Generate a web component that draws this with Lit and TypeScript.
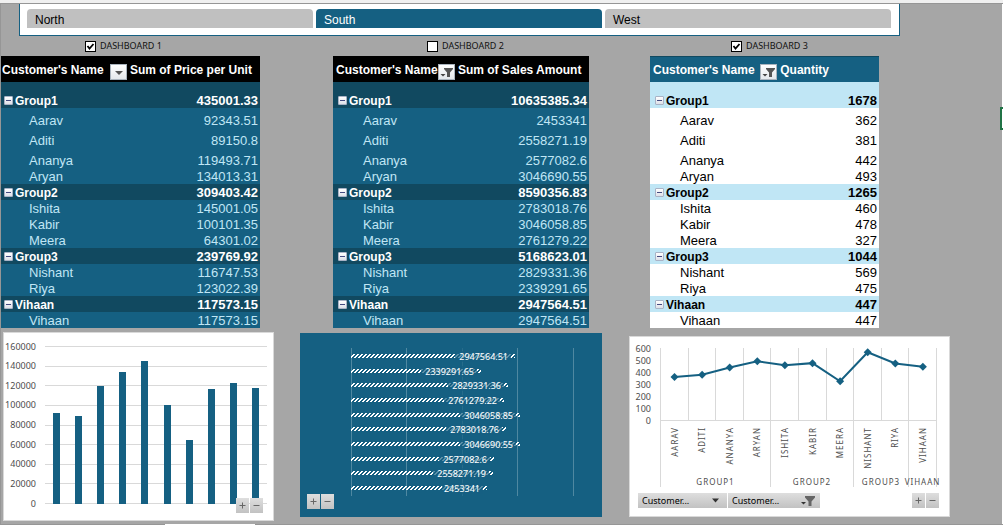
import { LitElement, html, svg, css, nothing } from "lit";
import { customElement, property, state } from "lit/decorators.js";
import { classMap } from "lit/directives/class-map.js";

interface Member { name: string; price: number; sales: number; qty: number; }
interface Group { name: string; price: number; sales: number; qty: number; members: Member[]; }
type Measure = "price" | "sales" | "qty";

const GROUPS: Group[] = [
  { name: "Group1", price: 435001.33, sales: 10635385.34, qty: 1678, members: [
    { name: "Aarav", price: 92343.51, sales: 2453341, qty: 362 },
    { name: "Aditi", price: 89150.8, sales: 2558271.19, qty: 381 },
    { name: "Ananya", price: 119493.71, sales: 2577082.6, qty: 442 },
    { name: "Aryan", price: 134013.31, sales: 3046690.55, qty: 493 } ] },
  { name: "Group2", price: 309403.42, sales: 8590356.83, qty: 1265, members: [
    { name: "Ishita", price: 145001.05, sales: 2783018.76, qty: 460 },
    { name: "Kabir", price: 100101.35, sales: 3046058.85, qty: 478 },
    { name: "Meera", price: 64301.02, sales: 2761279.22, qty: 327 } ] },
  { name: "Group3", price: 239769.92, sales: 5168623.01, qty: 1044, members: [
    { name: "Nishant", price: 116747.53, sales: 2829331.36, qty: 569 },
    { name: "Riya", price: 123022.39, sales: 2339291.65, qty: 475 } ] },
  { name: "Vihaan", price: 117573.15, sales: 2947564.51, qty: 447, members: [
    { name: "Vihaan", price: 117573.15, sales: 2947564.51, qty: 447 } ] },
];
const MEMBERS = GROUPS.flatMap((g) => g.members);

const arrowIcon = html`<svg class="glyph" viewBox="0 0 17 16" aria-hidden="true">
  <path d="M5 7h8L9 11z" fill="#555"/></svg>`;
const funnelIcon = html`<svg class="glyph" viewBox="0 0 17 16" aria-hidden="true">
  <path d="M2.500 10h5L5 12.500z" fill="#444"/>
  <path d="M6 4h9v1l-3 3.500V13H9V8.500L6 5z" fill="#555"/></svg>`;

@customElement("pivot-table")
class PivotTable extends LitElement {
  @property() heading = "";
  @property() measure: Measure = "price";
  @property() tone: "black" | "light" = "black";
  @property({ type: Boolean }) filtered = false;
  @property({ type: Boolean }) inset = false;
  @state() private closed = new Set<string>();

  static styles = css`
    :host { display: block; }
    table {
      width: 100%; border-collapse: collapse; table-layout: fixed;
      font: 13px/14px "Liberation Sans", Arial, sans-serif;
      background: #156082; color: #c0e6f5;
    }
    .c1 { width: 49%; }
    .inset .c1 { width: 48%; }
    .light .c1 { width: 56%; }
    th, td { padding: 2px 2px 0; vertical-align: bottom; white-space: nowrap; text-align: left; }
    td { text-align: right; }
    thead th { font-size: 12px; padding: 0 2px; vertical-align: middle; background: #000; color: #fff; }
    thead th:first-child { padding: 0 1px; }
    .inset thead th:first-child { padding-left: 3px; }
    .label { display: flex; align-items: center; justify-content: space-between; box-sizing: border-box; height: 26px; padding-top: 2px; }
    .label button { align-self: end; margin-bottom: 2px; flex: none; }
    button { padding: 0; font: inherit; }
    .filter { width: 17px; height: 16px; border: 1px solid #aab4be; background: linear-gradient(#fff, #e4e8ec); }
    .glyph { display: block; width: 17px; height: 16px; margin: -1px; }
    .group th { font-size: 12px; padding-left: 3px; }
    .inset .group th { padding-left: 5px; }
    .group { background: #114960; color: #fff; font-weight: 700; }
    .group th span { padding-left: 2px; }
    .toggle {
      width: 9px; height: 9px; border: 1px solid #a9b3c6; border-radius: 1px; vertical-align: 1px;
      background: linear-gradient(#444a80, #444a80) center / 5px 1px no-repeat, linear-gradient(#fff, #dde0e8);
    }
    .member th { font-weight: 400; padding-left: 28px; }
    .inset .member th { padding-left: 30px; }
    .tall > * { height: 18px; }
    .first > * { height: 24px; }
    .light table { background: #fff; color: #000; }
    .light thead th { background: linear-gradient(#114960, #114960) top / 100% 1px no-repeat #156082; color: #fff; }
    .light .group { background: #c0e6f5; color: #000; }
  `;

  private flip(name: string) {
    const next = new Set(this.closed);
    next.has(name) ? next.delete(name) : next.add(name);
    this.closed = next;
  }

  render() {
    return html`<div class=${classMap({ light: this.tone === "light", inset: this.inset })}>
      <table>
        <colgroup><col class="c1"><col></colgroup>
        <thead><tr>
          <th scope="col"><div class="label">Customer's Name
            <button class="filter" aria-label="Filter customers">${this.filtered ? funnelIcon : arrowIcon}</button></div></th>
          <th scope="col"><div class="label">${this.heading}</div></th>
        </tr></thead>
        <tbody>${GROUPS.map((g, gi) => html`
          <tr class=${classMap({ group: true, first: gi === 0 })}>
            <th scope="row"><button class="toggle" aria-label="Toggle ${g.name}" @click=${() => this.flip(g.name)}></button><span>${g.name}</span></th>
            <td>${g[this.measure]}</td>
          </tr>
          ${this.closed.has(g.name) ? nothing : g.members.map((m, i) => html`
            <tr class=${classMap({ member: true, tall: gi === 0 && i < 3 })}>
              <th scope="row">${m.name}</th><td>${m[this.measure]}</td></tr>`)}`)}
        </tbody>
      </table></div>`;
  }
}

@customElement("zoom-buttons")
class ZoomButtons extends LitElement {
  static styles = css`
    :host { display: flex; gap: 1px; }
    button { width: 13px; height: 15px; padding: 0; border: 0; background: linear-gradient(#dedede, #c2c2c2); }
    svg { display: block; width: 13px; height: 15px; }
  `;
  render() {
    return html`
      <button aria-label="Expand field"><svg viewBox="0 0 13 15"><path d="M3.500 7.500h6M6.500 4.500v6" stroke="#666"/></svg></button>
      <button aria-label="Collapse field"><svg viewBox="0 0 13 15"><path d="M3.500 7.500h6" stroke="#666"/></svg></button>`;
  }
}

const chartStyles = css`
  :host { display: block; position: relative; }
  .plot { display: block; width: 100%; height: auto; font: 9px "Noto Sans", sans-serif; fill: #4d4d4d; }
  .frame { border: 1px solid #d9d9d9; background: #fff; }
  .end { text-anchor: end; }
  .mid { text-anchor: middle; }
`;

@customElement("price-chart")
class PriceChart extends LitElement {
  static styles = [chartStyles, css`zoom-buttons { position: absolute; right: 11px; bottom: 8px; }`];
  render() {
    const y = (v: number) => 170.5 - (v / 160000) * 157;
    const ticks = Array.from({ length: 9 }, (_, i) => i * 20000);
    return html`<div class="frame">
      <svg class="plot" viewBox="0 0 269 187" role="img" aria-label="Sum of Price per Unit">
        ${ticks.map((t) => svg`
          <path d="M41 ${Math.floor(y(t)) + 0.5}H263" stroke="#d9d9d9"/>
          <text class="end" x="32" y=${Math.round(y(t)) + 3}>${t}</text>`)}
        ${MEMBERS.map((m, i) => svg`
          <rect x=${Math.round(49 + i * 22.1)} y=${Math.round(y(m.price))} width="7" height=${171 - Math.round(y(m.price))} fill="#156082"/>`)}
      </svg></div><zoom-buttons></zoom-buttons>`;
  }
}

@customElement("sales-chart")
class SalesChart extends LitElement {
  static styles = [chartStyles, css`
    .panel { background: #156082; }
    .value { fill: #fff; }
    zoom-buttons { position: absolute; left: 7px; bottom: 8px; }
  `];
  render() {
    const rows = [...MEMBERS].reverse();
    return html`<div class="panel">
      <svg class="plot" viewBox="0 0 302 184" role="img" aria-label="Sum of Sales Amount">
        <defs><pattern id="hatch" width="4" height="4" patternUnits="userSpaceOnUse">
          <path d="M2 0h2v1h-2zM1 1h2v1h-2zM0 2h2v1h-2zM0 3h1v1h-1zM3 3h1v1h-1z" fill="#fff" shape-rendering="crispEdges"/>
        </pattern></defs>
        ${[51.5, 106.5, 162.5, 217.5, 273.5].map((x, i) => svg`
          <path d="M${x} 15V163" stroke="#fff" stroke-opacity=${i === 2 ? 0.08 : 0.25}/>`)}
        ${rows.map((m, i) => {
          const top = Math.round(21 + i * 14.67);
          const w = Math.round(m.sales / 18000);
          const label = String(m.sales);
          const lw = Math.round(label.length * 5 + 6);
          return svg`
            <g transform="translate(51 ${top})">
              <rect width=${w} height="4" fill="url(#hatch)"/>
              <rect x=${w - lw - 4} y="-3" width=${lw} height="11" fill="#156082" fill-opacity="0.7"/>
              <text class="value end" x=${w - 7} y="6">${label}</text>
            </g>`;
        })}
      </svg></div><zoom-buttons></zoom-buttons>`;
  }
}

@customElement("quantity-chart")
class QuantityChart extends LitElement {
  static styles = [chartStyles, css`
    .names { font-size: 8px; letter-spacing: 1px; }
    .controls { display: flex; gap: 1px; padding: 5px 10px 8px 8px; }
    .field { position: relative; width: 89px; }
    .field.wide { width: 92px; }
    select {
      display: block; appearance: none; width: 100%; height: 15px; padding: 0 4px; border: 0; border-radius: 0;
      background: linear-gradient(#dedede, #c2c2c2); color: #000; font: 9px/15px "Noto Sans", sans-serif;
    }
    .mark { position: absolute; right: 4px; top: 0; width: 17px; height: 15px; pointer-events: none; }
    zoom-buttons { margin-left: auto; }
  `];
  render() {
    const x = (i: number) => 44.5 + i * 27.6;
    const y = (v: number) => 83.5 - v * 0.12;
    const edges = Array.from({ length: 11 }, (_, i) => Math.floor(30.5 + i * 27.6) + 0.5);
    const bounds = new Set([0, 4, 7, 9, 10]);
    const spans = [[0, 4], [4, 7], [7, 9], [9, 10]];
    return html`<div class="frame">
      <svg class="plot" viewBox="0 0 319 151" role="img" aria-label="Quantity">
        ${edges.map((e, i) => svg`<path d="M${e} 11V${bounds.has(i) ? 150 : 83}" stroke="#d9d9d9"/>`)}
        <path d="M30 83.500H307" stroke="#d9d9d9"/>
        ${[0, 100, 200, 300, 400, 500, 600].map((t) => svg`<text class="end" x="21" y=${Math.round(y(t)) + 3}>${t}</text>`)}
        <polyline points=${MEMBERS.map((m, i) => `${x(i)},${y(m.qty)}`).join(" ")} fill="none" stroke="#156082" stroke-width="2"/>
        ${MEMBERS.map((m, i) => svg`
          <path transform="translate(${x(i)} ${y(m.qty)})" d="M0-4L4 0 0 4-4 0z" fill="#156082"/>`)}
        <g class="names">
          ${MEMBERS.map((m, i) => svg`
            <text class="end" transform="translate(${Math.round(x(i)) + 3} 90) rotate(-90)">${m.name.toUpperCase()}</text>`)}
          ${spans.map(([a, b], i) => svg`
            <text class="mid" x=${(edges[a] + edges[b]) / 2} y="148">${GROUPS[i].name.toUpperCase()}</text>`)}
        </g>
      </svg>
      <div class="controls">
        <div class="field">
          <select aria-label="Customer group"><option>Customer...</option></select>
          <svg class="mark" viewBox="0 0 17 15"><path d="M6 5.500h7L9.500 9.500z" fill="#333"/></svg>
        </div>
        <div class="field wide">
          <select aria-label="Customer name"><option>Customer...</option></select>
          <svg class="mark" viewBox="0 0 17 15"><path d="M2 9h5L4.500 11.500z" fill="#333"/><path d="M6 3h10v1.500L12.500 8.500V13h-3V8.500L6 4.500z" fill="#666"/></svg>
        </div>
        <zoom-buttons></zoom-buttons>
      </div></div>`;
  }
}

@customElement("app-root")
class AppRoot extends LitElement {
  @state() private region = "South";

  static styles = css`
    * { box-sizing: border-box; }
    :host { display: block; font-family: "Liberation Sans", Arial, sans-serif; }
    .sheet {
      position: relative; display: flex; flex-direction: column; min-height: 100vh;
      background: #a6a6a6; border-left: 1px solid #969696;
    }
    .ribbon { height: 4px; margin-left: -1px; background: #f0f0f0; border-bottom: 1px solid #969696; }
    .body { flex: 1; border-right: 1px solid #fff; }
    .top { display: grid; grid-template-columns: 18fr 881fr 102fr; }
    .slicer {
      grid-column: 2; display: grid; grid-template-columns: repeat(3, 1fr); gap: 3px;
      height: 32px; padding: 5px 8px 7px 7px; background: #fff; border: 1px solid #156082; border-top: 0;
    }
    .slicer button {
      border: 0; border-radius: 4px 4px 0 0; padding: 3px 8px 0; text-align: left;
      font: 12px/15px "Liberation Sans", Arial, sans-serif; background: #c0c0c0; color: #000;
    }
    .slicer .on { background: #156082; color: #fff; }
    .pivots { display: grid; grid-template-columns: 259fr 73fr 256fr 61fr 229fr 123fr; }
    .charts { display: grid; grid-template-columns: 2fr 271fr 26fr 302fr 27fr 321fr 52fr; padding-top: 4px; align-items: start; }
    .p1 { grid-column: 1; } .p2 { grid-column: 3; } .p3 { grid-column: 5; }
    .q1 { grid-column: 2; } .q2 { grid-column: 4; margin-top: 1px; } .q3 { grid-column: 6; margin-top: 4px; }
    .pick { display: flex; align-items: center; gap: 4px; height: 20px; padding-left: 84px; font: 9px/12px "Noto Sans", sans-serif; color: #111; }
    .p2 .pick { padding-left: 94px; }
    .p3 .pick { padding-left: 81px; }
    .pick input {
      appearance: none; width: 11px; height: 11px; margin: 0; border: 1px solid #000; background: #fff;
    }
    .pick input:checked {
      background: #fff url("data:image/svg+xml,%3Csvg xmlns='http://www.w3.org/2000/svg' viewBox='0 0 9 9'%3E%3Cpath d='M1.500 4l2 2.500L7.500 2' fill='none' stroke='%23000' stroke-width='1.800'/%3E%3C/svg%3E") center / 9px 9px no-repeat;
    }
    .cell { position: absolute; right: 0; top: 107px; width: 3px; height: 23px; background: #fff; border: 2px solid #217346; border-right: 0; }
    .status { height: 1px; background: linear-gradient(#fff, #fff) 18% 0 / 9% 100% no-repeat #969696; }
  `;

  private pick(id: string, label: string, on: boolean) {
    return html`<div class="pick"><input type="checkbox" id=${id} .checked=${on}><label for=${id}>${label}</label></div>`;
  }

  render() {
    return html`<main class="sheet">
      <div class="ribbon"></div>
      <div class="body">
        <div class="top"><div class="slicer" role="group" aria-label="Region">
          ${["North", "South", "West"].map((r) => html`
            <button class=${classMap({ on: r === this.region })} aria-pressed=${r === this.region}
              @click=${() => (this.region = r)}>${r}</button>`)}
        </div></div>
        <section class="pivots">
          <div class="p1">${this.pick("d1", "DASHBOARD 1", true)}
            <pivot-table heading="Sum of Price per Unit" measure="price"></pivot-table></div>
          <div class="p2">${this.pick("d2", "DASHBOARD 2", false)}
            <pivot-table heading="Sum of Sales Amount" measure="sales" filtered inset></pivot-table></div>
          <div class="p3">${this.pick("d3", "DASHBOARD 3", true)}
            <pivot-table heading="Quantity" measure="qty" tone="light" filtered inset></pivot-table></div>
        </section>
        <section class="charts">
          <price-chart class="q1"></price-chart>
          <sales-chart class="q2"></sales-chart>
          <quantity-chart class="q3"></quantity-chart>
        </section>
      </div>
      <div class="cell"></div>
      <div class="status"></div>
    </main>`;
  }
}
